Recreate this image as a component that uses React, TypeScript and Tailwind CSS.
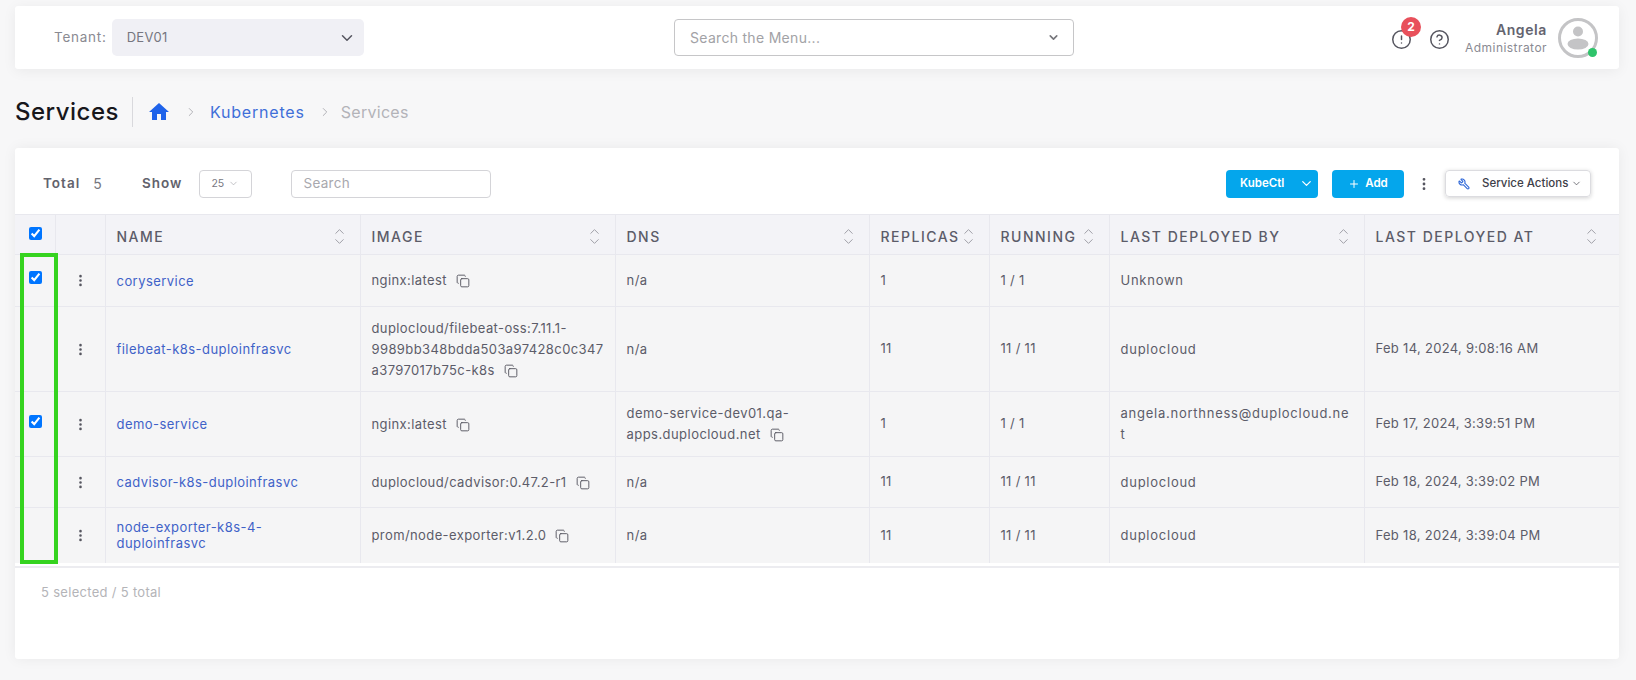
import { ChevronDown, ChevronRight, ChevronUp, CircleAlert, CircleHelp, Copy, EllipsisVertical, Plus, Wrench } from "lucide-react";
import type { ReactNode } from "react";

const columns = [
  { label: "", width: "w-[40px]" },
  { label: "", width: "w-[50px]" },
  { label: "NAME", width: "w-[255px]", sort: true },
  { label: "IMAGE", width: "w-[255px]", sort: true },
  { label: "DNS", width: "w-[254px]", sort: true },
  { label: "REPLICAS", width: "w-[120px]", sort: true },
  { label: "RUNNING", width: "w-[120px]", sort: true },
  { label: "LAST DEPLOYED BY", width: "w-[255px]", sort: true },
  { label: "LAST DEPLOYED AT", width: "w-[255px]", sort: true },
];

function CopyIcon() {
  return <Copy className="ml-[9px] inline-block h-[14px] w-[14px] align-[-3px] text-[#55555f]" strokeWidth={1.6} />;
}

type Row = {
  checked: boolean;
  height: string;
  name: ReactNode;
  image: ReactNode;
  dns: ReactNode;
  replicas: string;
  running: string;
  by: ReactNode;
  at: string;
};

const rows: Row[] = [
  {
    checked: true,
    height: "h-[52px]",
    name: "coryservice",
    image: <>nginx:latest<CopyIcon /></>,
    dns: "n/a",
    replicas: "1",
    running: "1 / 1",
    by: "Unknown",
    at: "",
  },
  {
    checked: false,
    height: "h-[85px]",
    name: "filebeat-k8s-duploinfrasvc",
    image: <>duplocloud/filebeat-oss:7.11.1-<br />9989bb348bdda503a97428c0c347<br />a3797017b75c-k8s<CopyIcon /></>,
    dns: "n/a",
    replicas: "11",
    running: "11 / 11",
    by: "duplocloud",
    at: "Feb 14, 2024, 9:08:16 AM",
  },
  {
    checked: true,
    height: "h-[65px]",
    name: "demo-service",
    image: <>nginx:latest<CopyIcon /></>,
    dns: <>demo-service-dev01.qa-<br />apps.duplocloud.net<CopyIcon /></>,
    replicas: "1",
    running: "1 / 1",
    by: <>angela.northness@duplocloud.ne<br />t</>,
    at: "Feb 17, 2024, 3:39:51 PM",
  },
  {
    checked: false,
    height: "h-[51px]",
    name: "cadvisor-k8s-duploinfrasvc",
    image: <>duplocloud/cadvisor:0.47.2-r1<CopyIcon /></>,
    dns: "n/a",
    replicas: "11",
    running: "11 / 11",
    by: "duplocloud",
    at: "Feb 18, 2024, 3:39:02 PM",
  },
  {
    checked: false,
    height: "h-[55px]",
    name: <>node-exporter-k8s-4-<br />duploinfrasvc</>,
    image: <>prom/node-exporter:v1.2.0<CopyIcon /></>,
    dns: "n/a",
    replicas: "11",
    running: "11 / 11",
    by: "duplocloud",
    at: "Feb 18, 2024, 3:39:04 PM",
  },
];

function Avatar() {
  return (
    <div className="relative h-[40px] w-[40px]">
      <svg viewBox="0 0 40 40" className="h-[40px] w-[40px]">
        <circle cx="20" cy="20" r="18.5" fill="#fff" stroke="#c4c4c6" strokeWidth="3" />
        <circle cx="20" cy="13.5" r="5" fill="#c4c4c6" />
        <ellipse cx="20" cy="26" rx="10.5" ry="5.5" fill="#c4c4c6" />
      </svg>
      <span className="absolute right-[1px] bottom-[1px] h-[9px] w-[9px] rounded-full bg-[#2fc46b]" />
    </div>
  );
}

export default function App() {
  return (
    <div className="min-h-screen bg-[#f7f7f8] px-[15px] pt-[6px] font-['Inter','Liberation_Sans',sans-serif] text-[13px] tracking-[0.3px] text-[#5c5c69]">
      {/* Top bar */}
      <div className="flex h-[63px] w-[1604px] items-center rounded-[3px] bg-white shadow-[0_2px_14px_rgba(0,0,0,0.06)]">
        <div className="flex w-[659px] items-center pl-[39px]">
          <span className="mr-[5px] text-[13.5px] tracking-[0.75px] text-[#8a8a92]">Tenant:</span>
          <div className="flex h-[37px] w-[252px] items-center justify-between rounded-[5px] bg-[#f0f0f5] pr-[8px] pl-[15px] text-[13px] text-[#76767f]">
            DEV01
            <ChevronDown className="h-[18px] w-[18px] text-[#55555f]" strokeWidth={2} />
          </div>
        </div>
        <div className="flex h-[37px] w-[400px] items-center justify-between rounded-[4px] border border-[#c6c6c8] pr-[13px] pl-[15px] text-[14px] text-[#a2a2a6]">
          Search the Menu...
          <ChevronDown className="h-[13px] w-[13px] text-[#77777c]" strokeWidth={3} />
        </div>
        <div className="ml-auto flex items-center pr-[21px]">
          <div className="relative mt-[3px] mr-[17px]">
            <CircleAlert className="h-[21px] w-[21px] text-[#55555f]" strokeWidth={1.7} />
            <span className="absolute -top-[12px] -right-[9px] flex h-[20px] w-[20px] items-center justify-center rounded-full bg-[#e8505b] text-[12px] font-bold text-white">2</span>
          </div>
          <CircleHelp className="mt-[3px] mr-[15px] h-[21px] w-[21px] text-[#55555f]" strokeWidth={1.7} />
          <div className="mr-[11px] flex flex-col items-end">
            <span className="text-[14px] leading-[19px] font-semibold tracking-[0.6px] text-[#64646f]">Angela</span>
            <span className="text-[12px] leading-[17px] tracking-[0.45px] text-[#8a8a92]">Administrator</span>
          </div>
          <Avatar />
        </div>
      </div>

      {/* Title + breadcrumb */}
      <div className="flex h-[79px] items-center pt-[6px]">
        <h1 className="text-[24px] font-medium tracking-[0.5px] text-[#17171c]">Services</h1>
        <div className="ml-[13px] h-[30px] w-px bg-[#d9d9dd]" />
        <svg viewBox="0 0 24 24" className="ml-[14px] h-[24px] w-[24px] fill-[#1f63ea]">
          <path d="M10 20v-6h4v6h5v-8h3L12 3 2 12h3v8z" />
        </svg>
        <ChevronRight className="ml-[13px] h-[14px] w-[14px] text-[#a8a8ae]" strokeWidth={1.5} />
        <span className="ml-[12px] text-[16px] tracking-[0.8px] text-[#3f6fd8]">Kubernetes</span>
        <ChevronRight className="ml-[13px] h-[14px] w-[14px] text-[#a8a8ae]" strokeWidth={1.5} />
        <span className="ml-[9px] text-[16px] text-[#b3b3b8]">Services</span>
      </div>

      {/* Card */}
      <div className="h-[511px] w-[1604px] rounded-[3px] bg-white shadow-[0_0_14px_rgba(0,0,0,0.06)]">
        <div className="flex h-[66px] items-center pt-[5px] pr-[28px] pl-[28px]">
          <span className="text-[13.5px] font-semibold tracking-[1px] text-[#62626c]">Total</span>
          <span className="ml-[13px] text-[14px] text-[#77777f]">5</span>
          <span className="ml-[40px] text-[13.5px] font-semibold tracking-[1px] text-[#62626c]">Show</span>
          <div className="ml-[17px] flex h-[28px] w-[53px] items-center rounded-[4px] border border-[#d4d4d8] pl-[11px] text-[10.5px] tracking-normal text-[#77777f]">
            25
            <ChevronDown className="ml-[4px] h-[11px] w-[11px] text-[#a8a8ae]" strokeWidth={1.5} />
          </div>
          <div className="ml-[39px] flex h-[28px] w-[200px] items-center rounded-[4px] border border-[#d4d4d8] pl-[11px] text-[13.5px] text-[#a8a8ae]">Search</div>
          <div className="ml-auto flex h-[28px] w-[92px] items-center justify-between rounded-[4px] bg-[#04a6ec] pr-[4px] pl-[14px] text-[11.5px] font-semibold tracking-normal text-white">
            KubeCtl
            <ChevronDown className="h-[15px] w-[15px]" strokeWidth={2} />
          </div>
          <div className="ml-[14px] flex h-[28px] w-[72px] items-center justify-center rounded-[4px] bg-[#04a6ec] text-[11.5px] font-semibold tracking-normal text-white">
            <Plus className="mr-[5px] h-[12px] w-[12px]" strokeWidth={2} />
            Add
          </div>
          <EllipsisVertical className="ml-[12px] h-[16px] w-[16px] text-[#55555f]" strokeWidth={2.2} />
          <div className="ml-[13px] flex h-[27px] w-[146px] items-center rounded-[4px] border border-[#dcdce0] pl-[12px] text-[11.5px] font-medium tracking-normal text-[#3e3e48] shadow-[0_1px_4px_rgba(0,0,0,0.18)]">
            <Wrench className="h-[12px] w-[12px] -scale-x-100 text-[#2f68d8]" strokeWidth={2.2} />
            <span className="ml-[12px]">Service Actions</span>
            <ChevronDown className="ml-[3px] h-[11px] w-[11px]" strokeWidth={1.5} />
          </div>
        </div>

        {/* Table, with the highlight drawn over its first column */}
        <div className="relative">
          <table className="w-[1604px] table-fixed border-collapse">
            <thead>
              <tr className="h-[40px] border-y border-[#e8e8ee] bg-[#f3f3f7]">
                {columns.map((col, i) => (
                  <th key={i} className={`${col.width} border-l border-[#e8e8ee] pt-[4px] pr-[13px] pl-[11px] text-left text-[14px] font-medium tracking-[1.5px] whitespace-nowrap text-[#5c5c69] first:border-l-0 last:pr-[20px]`}>
                    {i === 0 && <input type="checkbox" defaultChecked className="mb-[7px] ml-[3px] block h-[13px] w-[13px]" />}
                    {col.sort && (
                      <div className="flex items-center justify-between">
                        <span>{col.label}</span>
                        <span className="flex shrink-0 flex-col text-[#a0a0a8]">
                          <ChevronUp className="-mb-[5px] h-[15px] w-[15px]" strokeWidth={1.6} />
                          <ChevronDown className="h-[15px] w-[15px]" strokeWidth={1.6} />
                        </span>
                      </div>
                    )}
                  </th>
                ))}
              </tr>
            </thead>
            <tbody>
              {rows.map((row, i) => (
                <tr key={i} className={`${row.height} border-b border-[#e8e8ee] bg-[#f5f5f6] last:border-b-0`}>
                  <td className="px-[14px]">
                    {row.checked && <input type="checkbox" defaultChecked className="mb-[6px] block h-[13px] w-[13px]" />}
                  </td>
                  <td className="border-l border-[#e8e8ee] text-center">
                    <EllipsisVertical className="mx-auto h-[15px] w-[15px] text-[#55555f]" strokeWidth={2.2} />
                  </td>
                  <td className="border-l border-[#e8e8ee] px-[11px] leading-[16px] tracking-[0.45px] text-[#3f62c8]">{row.name}</td>
                  <td className="border-l border-[#e8e8ee] px-[11px] leading-[21px] tracking-[0.4px]">{row.image}</td>
                  <td className="border-l border-[#e8e8ee] px-[11px] leading-[21px] tracking-[0.45px]">{row.dns}</td>
                  <td className="border-l border-[#e8e8ee] px-[11px]">{row.replicas}</td>
                  <td className="border-l border-[#e8e8ee] px-[11px]">{row.running}</td>
                  <td className="border-l border-[#e8e8ee] px-[11px] leading-[21px] tracking-[0.75px] whitespace-nowrap">{row.by}</td>
                  <td className="border-l border-[#e8e8ee] px-[11px]">{row.at}</td>
                </tr>
              ))}
            </tbody>
          </table>
          <div className="pointer-events-none absolute top-[39px] left-[5px] h-[311px] w-[38px] border-[4px] border-[#35d31f]" />
        </div>

        <div className="mt-[3px] border-t-2 border-[#ececf0] pt-[15px] pl-[26px] text-[13px] text-[#b4b4b8]">5 selected / 5 total</div>
      </div>
    </div>
  );
}
